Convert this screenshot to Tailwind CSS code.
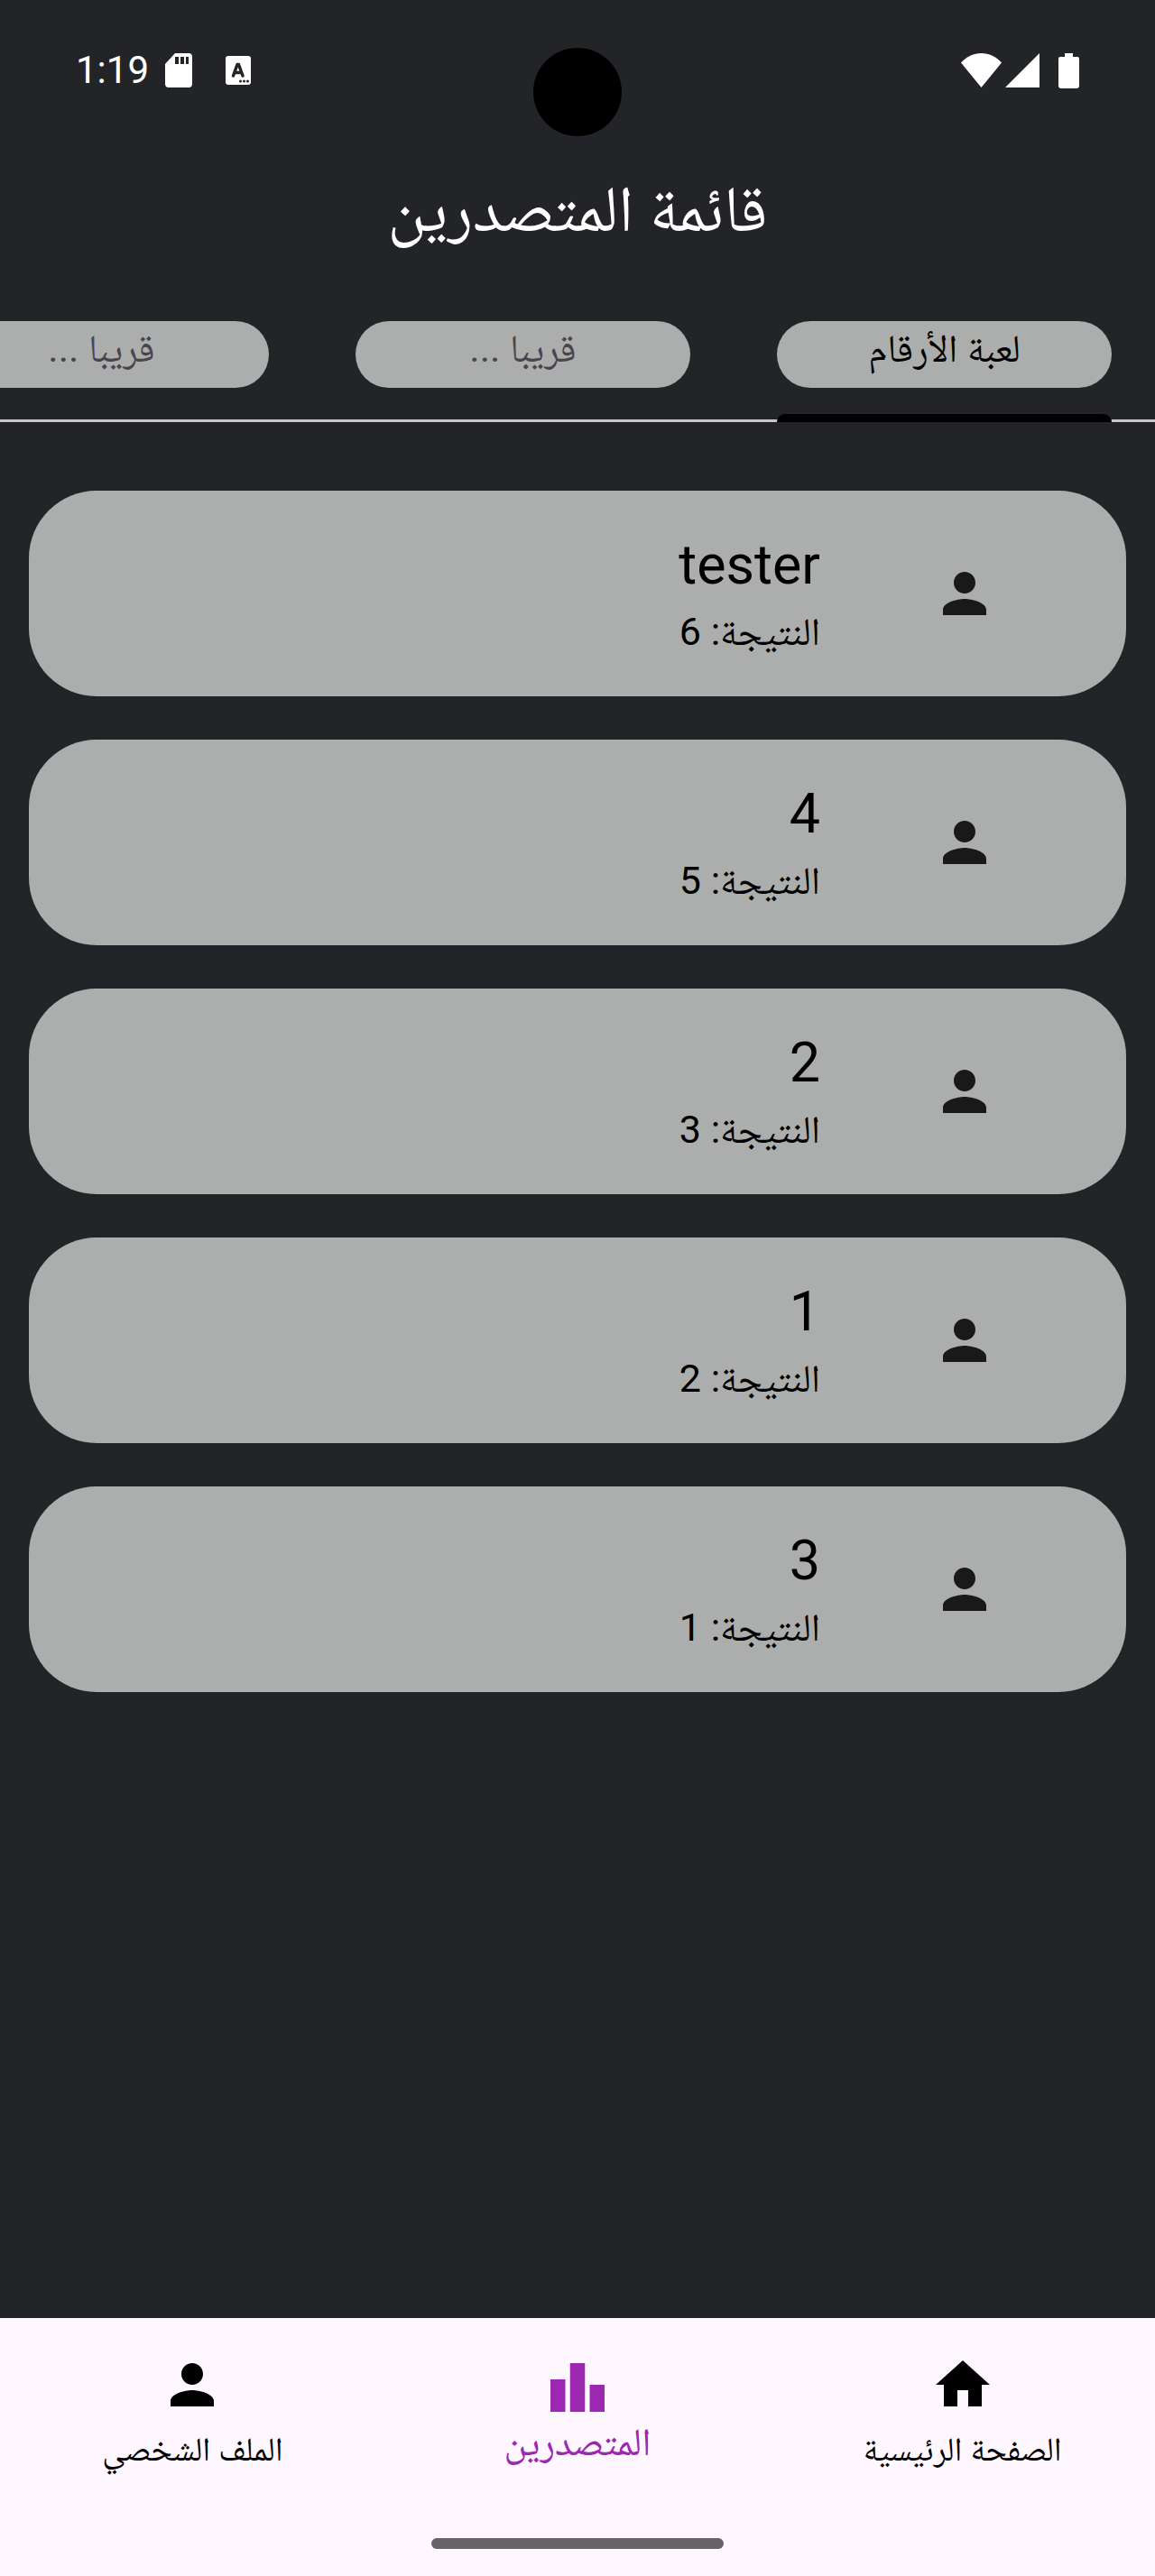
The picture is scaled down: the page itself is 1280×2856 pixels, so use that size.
<!DOCTYPE html>
<html lang="ar" dir="rtl">
<head>
<meta charset="utf-8">
<meta name="viewport" content="width=device-width, initial-scale=1">
<title>قائمة المتصدرين</title>
<script src="https://cdn.jsdelivr.net/npm/@tailwindcss/browser@4"></script>
</head>
<body class="flex min-h-screen flex-col overflow-x-hidden bg-[#232428] font-[Roboto,'Noto_Naskh_Arabic','DejaVu_Sans',sans-serif] text-[43px] text-black">

<svg class="hidden" aria-hidden="true">
  <symbol id="person" viewBox="0 0 24 24"><path d="M12 12c2.21 0 4-1.79 4-4s-1.79-4-4-4-4 1.79-4 4 1.79 4 4 4zm0 2c-2.67 0-8 1.34-8 4v2h16v-2c0-2.66-5.33-4-8-4z"/></symbol>
</svg>

<!-- System status bar -->
<div dir="ltr" class="relative flex h-39 items-center justify-between px-21 text-white">
  <div class="flex items-center">
    <span class="text-[42px] leading-[48px]">1:19</span>
    <svg class="ml-[18px] h-[38px] w-[30px]" viewBox="0 0 30 38" fill="currentColor" aria-hidden="true">
      <path fill-rule="evenodd" d="M11 0h15a4 4 0 0 1 4 4v30a4 4 0 0 1-4 4H4a4 4 0 0 1-4-4V12zM11 4v8h4V4zM17 4v8h4V4zM23 4v8h3V4z"/>
    </svg>
    <svg class="ml-[37px] h-8 w-7" viewBox="0 0 28 32" fill="none" aria-hidden="true">
      <rect width="28" height="32" rx="3" fill="currentColor"/>
      <path d="M8.500 22L13 9.500h1.500L19 22M10 18.500h7.500" stroke="#232428" stroke-width="3.500" stroke-linecap="round" stroke-linejoin="round"/>
      <g fill="#232428"><circle cx="16.500" cy="28" r="1.500"/><circle cx="20.500" cy="28" r="1.500"/><circle cx="24.500" cy="28" r="1.500"/></g>
    </svg>
  </div>
  <div class="absolute top-[53px] left-1/2 size-[98px] -translate-x-1/2 rounded-full bg-black"></div>
  <div class="flex items-center" aria-hidden="true">
    <svg class="h-[38px] w-[45px]" viewBox="0 0 45 38" fill="currentColor"><path d="M22.500 38L0 10.500C6 4 14 0 22.500 0S39 4 45 10.500z"/></svg>
    <svg class="ml-1 h-[38px] w-[38px]" viewBox="0 0 38 38" fill="currentColor"><path d="M38 0v38H0z"/></svg>
    <svg class="ml-[21px] h-[39px] w-[23px]" viewBox="0 0 23 39" fill="currentColor"><path d="M7 0h9v4h5a2 2 0 0 1 2 2v30a3 3 0 0 1-3 3H3a3 3 0 0 1-3-3V6a2 2 0 0 1 2-2h5z"/></svg>
  </div>
</div>

<header class="flex h-38 items-center justify-center">
  <h1 class="text-[72px] leading-[96px] text-white">قائمة المتصدرين</h1>
</header>

<!-- Game tabs -->
<div role="tablist" class="flex gap-24 overflow-hidden px-12 pt-12 shadow-[inset_0_-3px_0_#cac4d0]">
  <button role="tab" aria-selected="true" class="w-[371px] shrink-0">
    <span class="block rounded-full bg-[#acaead] pb-[14px] leading-[60px]">لعبة الأرقام</span>
    <span class="mt-[29px] block h-[9px] rounded-t-[9px] bg-black"></span>
  </button>
  <button role="tab" aria-selected="false" class="w-[371px] shrink-0 text-[#49454f]">
    <span class="block rounded-full bg-[#acaead] pb-[14px] leading-[60px]">قريبا ...</span>
    <span class="mt-[29px] block h-[9px]"></span>
  </button>
  <button role="tab" aria-selected="false" class="w-[371px] shrink-0 text-[#49454f]">
    <span class="block rounded-full bg-[#acaead] pb-[14px] leading-[60px]">قريبا ...</span>
    <span class="mt-[29px] block h-[9px]"></span>
  </button>
</div>

<!-- Ranking -->
<main class="grow px-8 pt-19 pb-12">
  <ol class="flex flex-col gap-12">
    <li class="flex h-57 items-center gap-[124px] rounded-[75px] bg-[#acaead] ps-[143px]">
      <svg class="size-18 shrink-0 fill-[#191919]" aria-hidden="true"><use href="#person"/></svg>
      <div>
        <h2 class="text-[61px] leading-[84px]">tester</h2>
        <p class="leading-[64px]">النتيجة: 6</p>
      </div>
    </li>
    <li class="flex h-57 items-center gap-[124px] rounded-[75px] bg-[#acaead] ps-[143px]">
      <svg class="size-18 shrink-0 fill-[#191919]" aria-hidden="true"><use href="#person"/></svg>
      <div>
        <h2 class="text-[61px] leading-[84px]">4</h2>
        <p class="leading-[64px]">النتيجة: 5</p>
      </div>
    </li>
    <li class="flex h-57 items-center gap-[124px] rounded-[75px] bg-[#acaead] ps-[143px]">
      <svg class="size-18 shrink-0 fill-[#191919]" aria-hidden="true"><use href="#person"/></svg>
      <div>
        <h2 class="text-[61px] leading-[84px]">2</h2>
        <p class="leading-[64px]">النتيجة: 3</p>
      </div>
    </li>
    <li class="flex h-57 items-center gap-[124px] rounded-[75px] bg-[#acaead] ps-[143px]">
      <svg class="size-18 shrink-0 fill-[#191919]" aria-hidden="true"><use href="#person"/></svg>
      <div>
        <h2 class="text-[61px] leading-[84px]">1</h2>
        <p class="leading-[64px]">النتيجة: 2</p>
      </div>
    </li>
    <li class="flex h-57 items-center gap-[124px] rounded-[75px] bg-[#acaead] ps-[143px]">
      <svg class="size-18 shrink-0 fill-[#191919]" aria-hidden="true"><use href="#person"/></svg>
      <div>
        <h2 class="text-[61px] leading-[84px]">3</h2>
        <p class="leading-[64px]">النتيجة: 1</p>
      </div>
    </li>
  </ol>
</main>

<!-- Bottom navigation -->
<footer class="flex flex-col items-center bg-[#fef7ff]">
  <nav class="grid w-full grid-cols-3 text-[37px] leading-[48px]">
    <a href="#home" class="flex flex-col items-center pt-[38px]">
      <svg class="size-18" viewBox="0 0 24 24" aria-hidden="true"><path d="M10 20v-6h4v6h5v-8h3L12 3 2 12h3v8z"/></svg>
      <span class="mt-3">الصفحة الرئيسية</span>
    </a>
    <a href="#leaders" aria-current="page" class="flex flex-col items-center pt-[41px] text-[#9c27b0]">
      <svg class="size-18" viewBox="0 0 24 24" fill="currentColor" aria-hidden="true"><path d="M7.500 21H2V9h5.500v12zm7.250-18h-5.500v18h5.500V3zM22 11h-5.500v10H22V11z"/></svg>
      <span class="text-[43px] leading-[48px]">المتصدرين</span>
    </a>
    <a href="#profile" class="flex flex-col items-center pt-[38px]">
      <svg class="size-18" aria-hidden="true"><use href="#person"/></svg>
      <span class="mt-3">الملف الشخصي</span>
    </a>
  </nav>
  <div class="mt-[74px] mb-[30px] h-3 w-[324px] rounded-full bg-[#666266]"></div>
</footer>

</body>
</html>
